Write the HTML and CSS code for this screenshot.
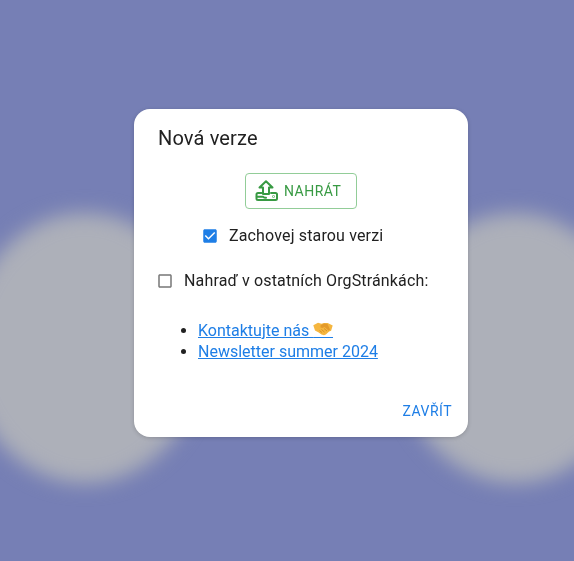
FILE: index.html
```html
<!DOCTYPE html>
<html lang="cs">
<head>
<meta charset="utf-8">
<title>Nová verze</title>
<link rel="stylesheet" href="styles.css">
</head>
<body>
<div class="backdrop">
  <div class="blob blob-left"></div>
  <div class="blob blob-right"></div>
</div>
<main class="dialog">
  <h2 class="title">Nová verze</h2>
  <div class="content">
    <div class="upload-row">
      <button class="upload" type="button">
        <svg class="upload-icon" viewBox="0 0 24 24" fill="none" stroke="currentColor" stroke-width="2" stroke-linejoin="round" stroke-linecap="round"><path d="M11 2.200 4.500 8.500H8v6.500h6V8.500h3.500z"/><path d="M6.500 14H3a1.500 1.500 0 0 0-1.500 1.500v4A1.500 1.500 0 0 0 3 21h17.500a1.500 1.500 0 0 0 1.500-1.500v-4a1.500 1.500 0 0 0-1.500-1.500H16"/><path d="M1.800 17.800h6.400c.6.700 1.500 1 2.800 1"/><circle cx="18.500" cy="17.500" r=".3"/></svg>
        <span>NAHRÁT</span>
      </button>
    </div>
    <label class="check check-center">
      <svg class="box box-on" viewBox="0 0 24 24"><path d="M19 3H5c-1.110 0-2 .9-2 2v14c0 1.100.89 2 2 2h14c1.110 0 2-.9 2-2V5c0-1.100-.89-2-2-2zm-9 14l-5-5 1.410-1.410L10 14.170l7.590-7.590L19 8l-9 9z"/></svg>
      <span>Zachovej starou verzi</span>
    </label>
    <label class="check check-left">
      <svg class="box box-off" viewBox="0 0 24 24"><path d="M19 5v14H5V5h14m0-2H5c-1.100 0-2 .9-2 2v14c0 1.100.9 2 2 2h14c1.100 0 2-.9 2-2V5c0-1.100-.9-2-2-2z"/></svg>
      <span>Nahraď v ostatních OrgStránkách:</span>
    </label>
    <ul class="links">
      <li><a href="#">Kontaktujte nás <span class="emoji-slot">&nbsp;&nbsp;&nbsp;&nbsp;&nbsp;<svg class="emoji" viewBox="0 0 20 14"><path fill="#f5b63f" d="M.3 3.300 5 .8l3.500 1L11 .9l3.700.2 5 2.400-1.600 5.300-2 .6-3.200 3-2 .9-2.400-.8-3.200-2.200L2 8.500z"/><path fill="#e39a2a" d="M7.600 3.300 11 1.500l3.500.5 2.500 5.500-1.200 1.300L11.500 5 9.500 6.100 7.500 5.500z"/><path fill="none" stroke="#c97f1e" stroke-width=".7" d="M6.500 8.500l2.500 2M8.500 7.500l3 2.600M11 6.500l3 2.500"/></svg></span></a></li>
      <li><a href="#">Newsletter summer 2024</a></li>
    </ul>
  </div>
  <div class="actions">
    <button class="close" type="button">ZAVŘÍT</button>
  </div>
</main>
</body>
</html>
```
FILE: styles.css
```css
* { box-sizing: border-box; }
html, body { height: 100%; }
body {
  margin: 0;
  min-height: 561px;
  display: flex;
  justify-content: center;
  align-items: flex-start;
  padding: 109px 0 0 28px;
  overflow: hidden;
  background: #767fb5;
  font-family: Roboto, "Liberation Sans", sans-serif;
  color: #212121;
}
.backdrop { position: fixed; inset: 0; overflow: hidden; }
.blob {
  position: absolute;
  top: 213px;
  width: 238px;
  height: 270px;
  border-radius: 50%;
  background: #adb0b9;
  filter: blur(10px);
}
.blob-left { left: -34px; }
.blob-right { left: 396px; }
.dialog {
  position: relative;
  width: 334px;
  height: 328px;
  background: #fff;
  border-radius: 16px;
  box-shadow: 0 1px 4px rgba(0,0,0,.18);
  display: flex;
  flex-direction: column;
}
.title {
  margin: 0;
  padding: 16px 24px 0;
  font-size: 20px;
  line-height: 26px;
  font-weight: 400;
  letter-spacing: .15px;
}
.content { flex: 1; padding: 22px 24px 0; }
.upload-row { display: flex; justify-content: center; }
.upload {
  display: flex;
  align-items: center;
  gap: 5px;
  width: 112px;
  height: 36px;
  padding: 0 0 0 9px;
  background: #fff;
  border: 1px solid #92cd98;
  border-radius: 4px;
  color: #389a43;
  font: 450 14px/24px Roboto, sans-serif;
  letter-spacing: .5px;
}
.upload-icon { width: 24px; height: 24px; flex: none; }
.check { display: flex; align-items: center; font-size: 16px; line-height: 24px; letter-spacing: .15px; }
.check-center { margin-top: 15px; padding-left: 45px; gap: 10px; }
.check-left { margin-top: 21px; gap: 10px; }
.box { width: 18px; height: 18px; flex: none; margin-left: -2px; }
.box-on { fill: #1e7ee6; }
.box-off { fill: #777; }
.links { margin: 27px 0 0; padding: 0 0 0 40px; font-size: 16px; line-height: 21px; }
.links a { color: #1e7ee6; text-decoration: underline; }
.emoji-slot { position: relative; }
.emoji { position: absolute; left: 0; top: 1px; width: 20px; height: 14px; }
.actions { display: flex; justify-content: flex-end; padding: 0 16px 14px; }
.close {
  padding: 0;
  border: 0;
  background: none;
  color: #1e7ee6;
  font: 450 14px/24px Roboto, sans-serif;
  letter-spacing: .5px;
}
```
